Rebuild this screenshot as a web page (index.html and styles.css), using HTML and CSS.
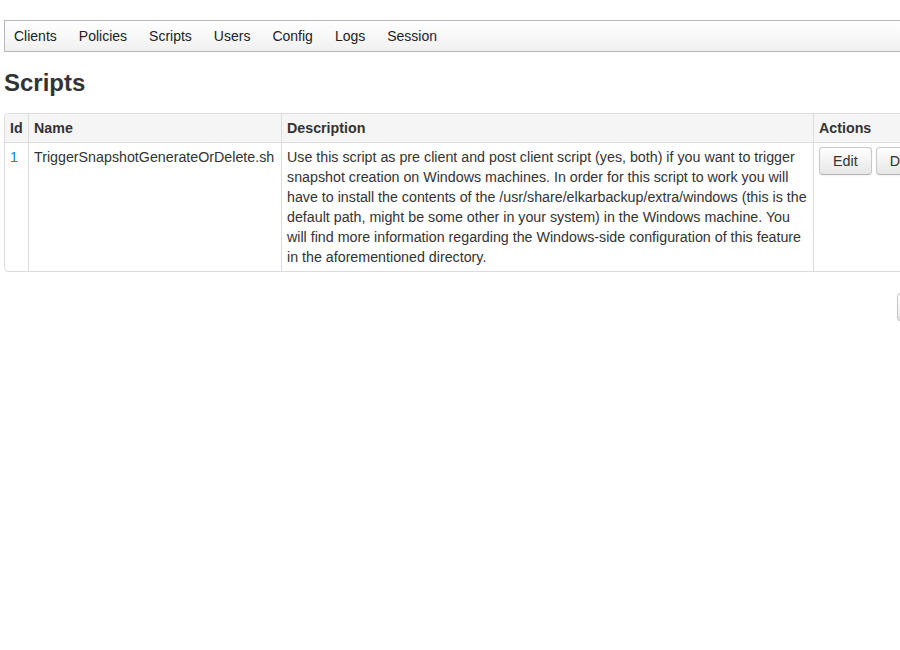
FILE: index.html
```html
<!DOCTYPE html>
<html>
<head>
<meta charset="utf-8">
<title>Scripts</title>
<link rel="stylesheet" href="styles.css">
</head>
<body>
<div class="page">
  <div class="navbar">
    <ul class="nav">
      <li><a href="#">Clients</a></li>
      <li><a href="#">Policies</a></li>
      <li><a href="#">Scripts</a></li>
      <li><a href="#">Users</a></li>
      <li><a href="#">Config</a></li>
      <li><a href="#">Logs</a></li>
      <li><a href="#">Session</a></li>
    </ul>
  </div>
  <h2 class="title">Scripts</h2>
  <table class="grid">
    <thead>
      <tr>
        <th class="c-id">Id</th>
        <th class="c-name">Name</th>
        <th class="c-desc">Description</th>
        <th class="c-act">Actions</th>
      </tr>
    </thead>
    <tbody>
      <tr>
        <td><a href="#" class="link">1</a></td>
        <td>TriggerSnapshotGenerateOrDelete.sh</td>
        <td>Use this script as pre client and post client script (yes, both) if you want to trigger snapshot creation on Windows machines. In order for this script to work you will have to install the contents of the /usr/share/elkarbackup/extra/windows (this is the default path, might be some other in your system) in the Windows machine. You will find more information regarding the Windows-side configuration of this feature in the aforementioned directory.</td>
        <td class="actions"><button class="btn">Edit</button> <button class="btn">Delete</button></td>
      </tr>
    </tbody>
  </table>
  <div class="footer-actions">
    <button class="btn">New</button>
  </div>
</div>
</body>
</html>
```
FILE: styles.css
```css
html, body {
  margin: 0;
  padding: 0;
  background: #fff;
}
body {
  font-family: "Liberation Sans", Arial, sans-serif;
  font-size: 14px;
  line-height: 20px;
  color: #333;
  overflow: hidden;
}
.page {
  width: 950px;
  margin: 20px 0 0 4px;
}
.navbar {
  border: 1px solid #b4b6c0;
  border-right: none;
  background: linear-gradient(to bottom, #ffffff, #f0f0f0);
  margin-bottom: 11px;
}
.nav {
  list-style: none;
  margin: 0 0 0 -2px;
  padding: 0;
  display: flex;
}
.nav a {
  display: block;
  padding: 5px 11px;
  color: #222;
  text-decoration: none;
}
.title {
  font-size: 24px;
  line-height: 40px;
  font-weight: bold;
  margin: 0 0 10px;
  color: #333;
}
.grid {
  width: 100%;
  border-collapse: separate;
  border-spacing: 0;
  border: 1px solid #ddd;
  border-radius: 4px;
  margin-bottom: 20px;
  font-size: 14.25px;
}
.grid th, .grid td {
  padding: 4px 5px;
  text-align: left;
  vertical-align: top;
  border-left: 1px solid #ddd;
  border-top: 1px solid #ddd;
}
.grid th:first-child, .grid td:first-child {
  border-left: none;
}
.grid thead th {
  border-top: none;
  background: #f5f5f5;
  font-weight: bold;
}
.grid thead th:first-child { border-top-left-radius: 4px; }
.grid tbody td:first-child { border-bottom-left-radius: 4px; }
.c-id { width: 13px; }
.c-name { width: 242px; }
.c-desc { width: 521px; }
.actions { white-space: nowrap; }
.link {
  color: #0088cc;
  text-decoration: none;
}
.btn {
  font-family: "Liberation Sans", Arial, sans-serif;
  font-size: 14.35px;
  line-height: 20px;
  color: #333;
  padding: 3px 13px;
  border: 1px solid #c8c8c8;
  border-bottom-color: #b3b3b3;
  border-radius: 4px;
  background: linear-gradient(to bottom, #ffffff, #e6e6e6);
  box-shadow: inset 0 1px 0 rgba(255,255,255,.2), 0 1px 2px rgba(0,0,0,.05);
  margin: 0;
}
.footer-actions {
  display: flex;
  justify-content: flex-end;
  padding-top: 1px;
}
```
